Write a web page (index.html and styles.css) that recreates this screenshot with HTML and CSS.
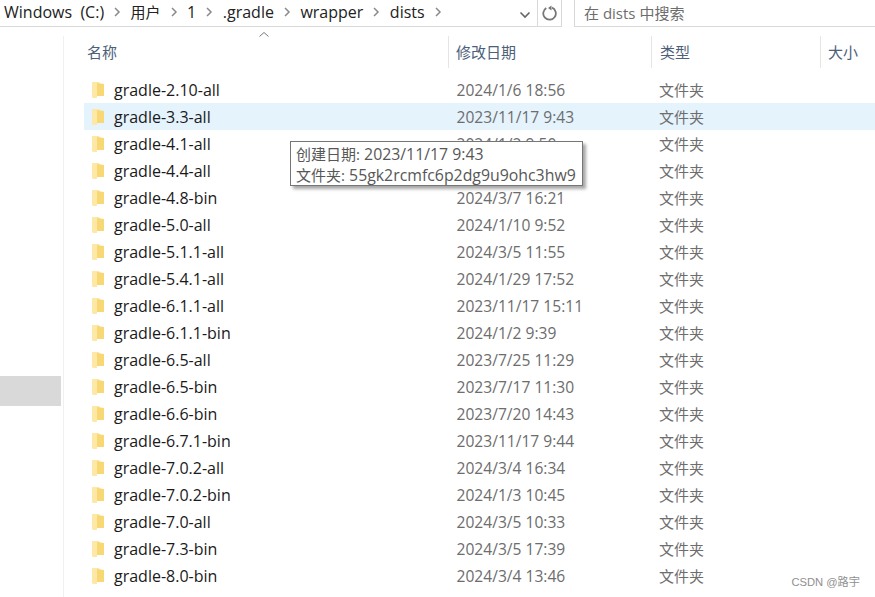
FILE: index.html
```html
<!DOCTYPE html>
<html lang="zh">
<head>
<meta charset="utf-8">
<title>dists</title>
<link rel="stylesheet" href="styles.css">
</head>
<body>
<div class="toolbar">
  <div class="address">
    <nav class="crumbs">
      <span class="cw">Windows&nbsp; (C:)</span><svg class="sep" viewBox="0 0 8 10"><path d="M2 1l4 4-4 4"/></svg>
      <span class="cj">用户</span><svg class="sep" viewBox="0 0 8 10"><path d="M2 1l4 4-4 4"/></svg>
      <span>1</span><svg class="sep" viewBox="0 0 8 10"><path d="M2 1l4 4-4 4"/></svg>
      <span>.gradle</span><svg class="sep" viewBox="0 0 8 10"><path d="M2 1l4 4-4 4"/></svg>
      <span>wrapper</span><svg class="sep" viewBox="0 0 8 10"><path d="M2 1l4 4-4 4"/></svg>
      <span>dists</span><svg class="sep" viewBox="0 0 8 10"><path d="M2 1l4 4-4 4"/></svg>
    </nav>
    <svg class="chev" viewBox="0 0 12 8"><path d="M1.500 1.500L6 6l4.500-4.500"/></svg>
    <div class="refresh"><svg viewBox="0 0 16 16"><path d="M10 2.600A6.300 6.300 0 1 1 4.300 3"/><path class="fill" d="M9.500 .5v5L6 3z"/></svg></div>
  </div>
  <div class="search">在 dists 中搜索</div>
</div>
<div class="main">
  <aside class="side"><div class="thumb"></div></aside>
  <section class="list">
    <div class="head">
      <div class="hc c-name">名称<svg class="sort" viewBox="0 0 10 5"><path d="M.5 4.500L5 .5l4.500 4"/></svg></div>
      <div class="hc c-date">修改日期</div>
      <div class="hc c-type">类型</div>
      <div class="hc c-size">大小</div>
    </div>
    <div class="rows">
      <div class="row"><svg class="fd" viewBox="0 0 14 18"><path class="b" d="M1 1h7l1 2h4v12H6v2H2l-1-1z"/><path class="f" d="M6 2l7 1v12H6z"/></svg><span class="n">gradle-2.10-all</span><span class="d">2024/1/6 18:56</span><span class="t">文件夹</span></div>
      <div class="row hot"><svg class="fd" viewBox="0 0 14 18"><path class="b" d="M1 1h7l1 2h4v12H6v2H2l-1-1z"/><path class="f" d="M6 2l7 1v12H6z"/></svg><span class="n">gradle-3.3-all</span><span class="d">2023/11/17 9:43</span><span class="t">文件夹</span></div>
      <div class="row"><svg class="fd" viewBox="0 0 14 18"><path class="b" d="M1 1h7l1 2h4v12H6v2H2l-1-1z"/><path class="f" d="M6 2l7 1v12H6z"/></svg><span class="n">gradle-4.1-all</span><span class="d">2024/1/2 9:50</span><span class="t">文件夹</span></div>
      <div class="row"><svg class="fd" viewBox="0 0 14 18"><path class="b" d="M1 1h7l1 2h4v12H6v2H2l-1-1z"/><path class="f" d="M6 2l7 1v12H6z"/></svg><span class="n">gradle-4.4-all</span><span class="d">2024/1/2 9:50</span><span class="t">文件夹</span></div>
      <div class="row"><svg class="fd" viewBox="0 0 14 18"><path class="b" d="M1 1h7l1 2h4v12H6v2H2l-1-1z"/><path class="f" d="M6 2l7 1v12H6z"/></svg><span class="n">gradle-4.8-bin</span><span class="d">2024/3/7 16:21</span><span class="t">文件夹</span></div>
      <div class="row"><svg class="fd" viewBox="0 0 14 18"><path class="b" d="M1 1h7l1 2h4v12H6v2H2l-1-1z"/><path class="f" d="M6 2l7 1v12H6z"/></svg><span class="n">gradle-5.0-all</span><span class="d">2024/1/10 9:52</span><span class="t">文件夹</span></div>
      <div class="row"><svg class="fd" viewBox="0 0 14 18"><path class="b" d="M1 1h7l1 2h4v12H6v2H2l-1-1z"/><path class="f" d="M6 2l7 1v12H6z"/></svg><span class="n">gradle-5.1.1-all</span><span class="d">2024/3/5 11:55</span><span class="t">文件夹</span></div>
      <div class="row"><svg class="fd" viewBox="0 0 14 18"><path class="b" d="M1 1h7l1 2h4v12H6v2H2l-1-1z"/><path class="f" d="M6 2l7 1v12H6z"/></svg><span class="n">gradle-5.4.1-all</span><span class="d">2024/1/29 17:52</span><span class="t">文件夹</span></div>
      <div class="row"><svg class="fd" viewBox="0 0 14 18"><path class="b" d="M1 1h7l1 2h4v12H6v2H2l-1-1z"/><path class="f" d="M6 2l7 1v12H6z"/></svg><span class="n">gradle-6.1.1-all</span><span class="d">2023/11/17 15:11</span><span class="t">文件夹</span></div>
      <div class="row"><svg class="fd" viewBox="0 0 14 18"><path class="b" d="M1 1h7l1 2h4v12H6v2H2l-1-1z"/><path class="f" d="M6 2l7 1v12H6z"/></svg><span class="n">gradle-6.1.1-bin</span><span class="d">2024/1/2 9:39</span><span class="t">文件夹</span></div>
      <div class="row"><svg class="fd" viewBox="0 0 14 18"><path class="b" d="M1 1h7l1 2h4v12H6v2H2l-1-1z"/><path class="f" d="M6 2l7 1v12H6z"/></svg><span class="n">gradle-6.5-all</span><span class="d">2023/7/25 11:29</span><span class="t">文件夹</span></div>
      <div class="row"><svg class="fd" viewBox="0 0 14 18"><path class="b" d="M1 1h7l1 2h4v12H6v2H2l-1-1z"/><path class="f" d="M6 2l7 1v12H6z"/></svg><span class="n">gradle-6.5-bin</span><span class="d">2023/7/17 11:30</span><span class="t">文件夹</span></div>
      <div class="row"><svg class="fd" viewBox="0 0 14 18"><path class="b" d="M1 1h7l1 2h4v12H6v2H2l-1-1z"/><path class="f" d="M6 2l7 1v12H6z"/></svg><span class="n">gradle-6.6-bin</span><span class="d">2023/7/20 14:43</span><span class="t">文件夹</span></div>
      <div class="row"><svg class="fd" viewBox="0 0 14 18"><path class="b" d="M1 1h7l1 2h4v12H6v2H2l-1-1z"/><path class="f" d="M6 2l7 1v12H6z"/></svg><span class="n">gradle-6.7.1-bin</span><span class="d">2023/11/17 9:44</span><span class="t">文件夹</span></div>
      <div class="row"><svg class="fd" viewBox="0 0 14 18"><path class="b" d="M1 1h7l1 2h4v12H6v2H2l-1-1z"/><path class="f" d="M6 2l7 1v12H6z"/></svg><span class="n">gradle-7.0.2-all</span><span class="d">2024/3/4 16:34</span><span class="t">文件夹</span></div>
      <div class="row"><svg class="fd" viewBox="0 0 14 18"><path class="b" d="M1 1h7l1 2h4v12H6v2H2l-1-1z"/><path class="f" d="M6 2l7 1v12H6z"/></svg><span class="n">gradle-7.0.2-bin</span><span class="d">2024/1/3 10:45</span><span class="t">文件夹</span></div>
      <div class="row"><svg class="fd" viewBox="0 0 14 18"><path class="b" d="M1 1h7l1 2h4v12H6v2H2l-1-1z"/><path class="f" d="M6 2l7 1v12H6z"/></svg><span class="n">gradle-7.0-all</span><span class="d">2024/3/5 10:33</span><span class="t">文件夹</span></div>
      <div class="row"><svg class="fd" viewBox="0 0 14 18"><path class="b" d="M1 1h7l1 2h4v12H6v2H2l-1-1z"/><path class="f" d="M6 2l7 1v12H6z"/></svg><span class="n">gradle-7.3-bin</span><span class="d">2024/3/5 17:39</span><span class="t">文件夹</span></div>
      <div class="row"><svg class="fd" viewBox="0 0 14 18"><path class="b" d="M1 1h7l1 2h4v12H6v2H2l-1-1z"/><path class="f" d="M6 2l7 1v12H6z"/></svg><span class="n">gradle-8.0-bin</span><span class="d">2024/3/4 13:46</span><span class="t">文件夹</span></div>
    </div>
  </section>
</div>
<div class="tip"><span class="cj">创建日期:</span> 2023/11/17 9:43<br><span class="cj">文件夹:</span> 55gk2rcmfc6p2dg9u9ohc3hw9</div>
<div class="mark">CSDN @路宇</div>
</body>
</html>
```
FILE: styles.css
```css
* { box-sizing: border-box; }
html, body { margin: 0; height: 100%; }
body {
  width: 875px; height: 597px; overflow: hidden; background: #fff; position: relative;
  font: 15px/20px "Open Sans", "Noto Sans CJK SC", sans-serif; color: #1a1a1a;
}
.cj { font-size: 15px; }
.toolbar { height: 27px; display: flex; align-items: flex-start; }
.address { width: 562px; height: 27px; display: flex; border-bottom: 1px solid #d9d9d9; flex: none; }
.crumbs {
  width: 516px; height: 26px; display: flex; align-items: center; gap: 9px;
  padding: 0 0 2px 4px; white-space: nowrap; overflow: hidden; color: #222; font-size: 16px; flex: none;
}
.sep { width: 8px; height: 10px; flex: none; fill: none; stroke: #8a8a8a; stroke-width: 1.5; margin-right: .5px; }
.chev { width: 12px; height: 8px; fill: none; stroke: #666; stroke-width: 1.6; margin: 11px 0 0 3px; flex: none; }
.refresh {
  width: 25px; height: 26px; margin-left: 6px; flex: none; border-left: 1px solid #d9d9d9; border-right: 1px solid #d9d9d9;
  display: flex; align-items: center; justify-content: center; padding-bottom: 1px;
}
.refresh svg { width: 16px; height: 16px; fill: none; stroke: #777; stroke-width: 1.8; }
.refresh .fill { fill: #777; stroke: none; }
.search {
  margin-left: 12px; flex: 1; height: 27px; padding: 3px 0 0 9px; border-left: 1px solid #d9d9d9;
  border-bottom: 1px solid #d9d9d9; color: #6d6d6d;
}
.main { display: flex; height: 570px; }
.side { width: 64px; flex: none; border-right: 1px solid #f0f0f0; padding-top: 340px; margin-top: 9px; margin-bottom: -9px; }
.thumb { width: 61px; height: 30px; background: #d9d9d9; }
.list { flex: 1; min-width: 0; }
.head { height: 32px; margin-top: 9px; display: flex; color: #4c607a; position: relative; }
.hc { display: flex; align-items: center; position: relative; flex: none; padding-left: 8px; }
.hc + .hc { border-left: 1px solid #e5e5e5; }
.c-name { width: 384px; padding-left: 23px; }
.c-date { width: 203px; padding-left: 7px; }
.c-type { width: 169px; }
.c-size { width: 55px; padding-left: 7px; }
.sort { position: absolute; left: 195px; top: -4px; width: 10px; height: 5px; fill: none; stroke: #7a7a7a; stroke-width: 1; }
.rows { margin-top: 8px; padding-left: 20px; }
.row { height: 27px; display: flex; align-items: center; white-space: nowrap; }
.hot { background: #e5f3fd; }
.fd { width: 14px; height: 18px; margin-left: 7px; flex: none; }
.fd .b { fill: #fde8a8; }
.fd .f { fill: #f8d775; }
.n { width: 342.500px; margin-left: 9px; flex: none; color: #1a1a1a; font-size: 16px; }
.d { width: 202.500px; flex: none; color: #6d6d6d; font-size: 15.600px; }
.t { color: #6d6d6d; }
.tip {
  position: absolute; left: 290px; top: 141px; width: 293px; height: 45px; padding: 2px 0 0 5px;
  background: #fff; border: 1px solid #767676; box-shadow: 3px 3px 3px rgba(0,0,0,.35);
  color: #575757; line-height: 21px; white-space: nowrap; font-size: 15.850px;
}
.mark { position: absolute; right: 15px; top: 573px; font: 11.200px/18px "Liberation Sans", "Noto Sans CJK SC", sans-serif; color: #8f8f8f; }
```
